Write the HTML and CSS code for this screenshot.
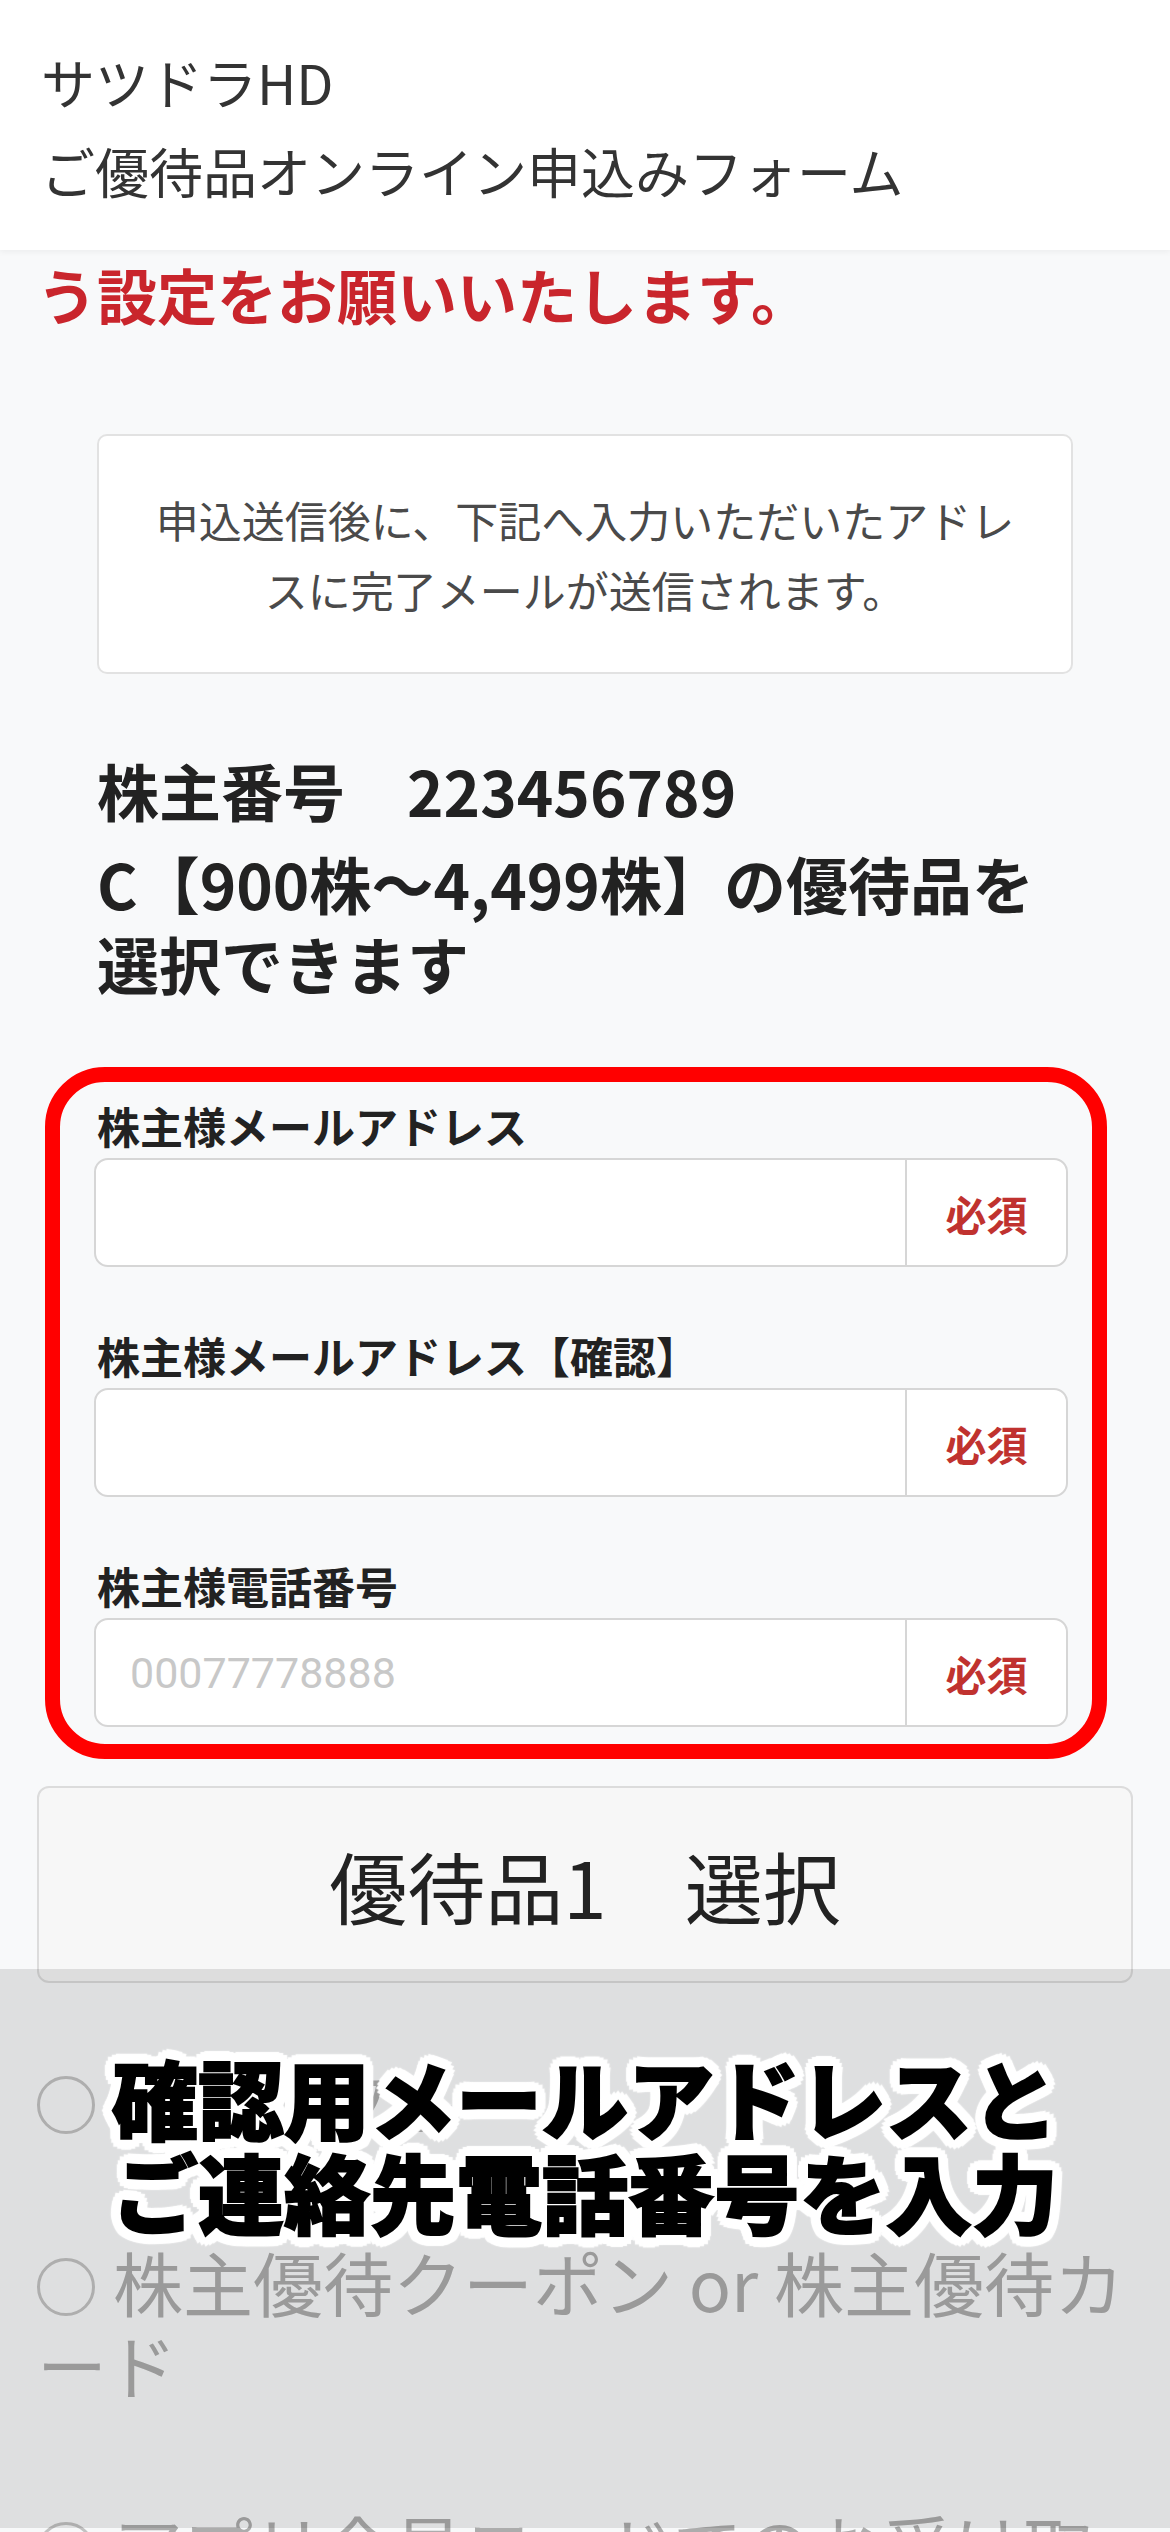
FILE: index.html
```html
<!DOCTYPE html>
<html lang="ja">

<head>
    <meta charset="UTF-8" />
    <meta name="viewport" content="width=device-width, initial-scale=1.0" />
    <title>サツドラHD ご優待品オンライン申込みフォーム</title>
    <link rel="stylesheet" href="styles.css">
</head>

<body>
    <header class="site-header">
        <div class="brand">サツドラHD</div>
        <div class="form-title">ご優待品オンライン申込みフォーム</div>
    </header>

    <main class="content">
        <p class="notice">う設定をお願いいたします。</p>

        <div class="info-box">申込送信後に、下記へ入力いただいたアドレスに完了メールが送信されます。</div>

        <div class="member">
            <p>株主番号　223456789</p>
            <p>C【900株〜4,499株】の優待品を選択できます</p>
        </div>

        <form class="fields">
            <div class="field">
                <label for="mail">株主様メールアドレス</label>
                <div class="input-group">
                    <input type="email" id="mail" name="mail" />
                    <span class="required">必須</span>
                </div>
            </div>

            <div class="field">
                <label for="mail-confirm">株主様メールアドレス【確認】</label>
                <div class="input-group">
                    <input type="email" id="mail-confirm" name="mail_confirm" />
                    <span class="required">必須</span>
                </div>
            </div>

            <div class="field">
                <label for="tel">株主様電話番号</label>
                <div class="input-group">
                    <input type="tel" id="tel" name="tel" placeholder="00077778888" />
                    <span class="required">必須</span>
                </div>
            </div>

            <!-- 注釈の赤枠 -->
            <div class="highlight"></div>
        </form>

        <button class="select-btn" type="button">優待品1　選択</button>

        <div class="choices">
            <label class="choice"><span class="radio"></span>優待ギフト</label>
            <label class="choice"><span class="radio"></span>株主優待クーポン or 株主優待カード</label>
            <label class="choice"><span class="radio"></span>アプリ会員コードでのお受け取り</label>
        </div>
    </main>

    <div class="caption-layer">
        <p class="caption">確認用メールアドレスと<br>ご連絡先電話番号を入力</p>
    </div>
</body>

</html>
```

FILE: styles.css
```css
* {
    box-sizing: border-box;
}

html,
body {
    height: 2532px;
    overflow: hidden;
}

body {
    margin: 0;
    background: #f8f9fa;
    font-family: "Noto Sans CJK JP", "Noto Sans", sans-serif;
    color: #222;
}

.site-header {
    background: #fff;
    padding: 37px 41px 35px;
    font-size: 54px;
    line-height: 89px;
    color: #333;
    box-shadow: 0 2px 6px rgba(0, 0, 0, 0.05);
}

.content {
    padding: 0 37px;
}

.notice {
    margin: 4px 0 0;
    font-size: 60px;
    font-weight: 700;
    line-height: 80px;
    color: #c9252c;
}

.info-box {
    margin: 100px 60px 0;
    padding: 48px 50px;
    background: #fff;
    border: 2px solid #e2e2e2;
    border-radius: 10px;
    font-size: 43px;
    line-height: 70px;
    text-align: center;
    color: #4a4a4a;
}

.member {
    margin: 76px 86px 0 60px;
    font-size: 62px;
    font-weight: 700;
    line-height: 80px;
}

.member p {
    margin: 0;
}

.member p + p {
    margin-top: 13px;
}

.fields {
    position: relative;
    margin: 92px 65px 0 57px;
}

.field + .field {
    margin-top: 58px;
}

.field label {
    display: block;
    padding-left: 3px;
    margin-bottom: 3px;
    font-size: 43px;
    font-weight: 700;
    line-height: 60px;
}

.input-group {
    display: flex;
    height: 109px;
    background: #fff;
    border: 2px solid #d6d6d6;
    border-radius: 14px;
    overflow: hidden;
}

.input-group input {
    flex: 1;
    min-width: 0;
    border: none;
    background: transparent;
    padding: 0 34px;
    font-family: Roboto, "Liberation Sans", sans-serif;
    font-size: 43px;
    color: #333;
}

.input-group input::placeholder {
    color: #c8c8c8;
}

.required {
    width: 161px;
    border-left: 2px solid #d6d6d6;
    display: flex;
    align-items: center;
    justify-content: center;
    font-size: 41px;
    font-weight: 700;
    color: #c0322f;
}

.highlight {
    position: absolute;
    top: -28px;
    left: -49px;
    right: -39px;
    bottom: -32px;
    border: 15px solid #ff0000;
    border-radius: 60px;
    pointer-events: none;
}

.select-btn {
    display: block;
    width: 100%;
    height: 197px;
    margin-top: 59px;
    background: #f7f7f7;
    border: 2px solid #dcdcdc;
    border-radius: 12px;
    font-family: "Noto Sans CJK JP", sans-serif;
    font-size: 78px;
    color: #222;
}

.choices {
    margin-top: 76px;
}

.choice {
    display: block;
    font-size: 70px;
    line-height: 82px;
    color: #acacac;
}

.choice + .choice {
    margin-top: 100px;
}

.radio {
    display: inline-block;
    width: 58px;
    height: 58px;
    margin-right: 18px;
    border: 3px solid #c2c2c2;
    border-radius: 50%;
    vertical-align: -4px;
}

/* 動画キャプション風のオーバーレイ */
.caption-layer {
    position: fixed;
    left: 0;
    right: 0;
    top: 1969px;
    height: 559px;
    padding-top: 81px;
    background: rgba(0, 0, 0, 0.1);
    text-align: center;
}

.caption {
    margin: 0;
    font-size: 86px;
    font-weight: 900;
    line-height: 94px;
    color: #000;
    -webkit-text-stroke: 2px #000;
    text-shadow:
        11px 0 1px #fff, -11px 0 1px #fff, 0 11px 1px #fff, 0 -11px 1px #fff,
        8px 8px 1px #fff, -8px 8px 1px #fff, 8px -8px 1px #fff, -8px -8px 1px #fff,
        10px 4px 1px #fff, -10px 4px 1px #fff, 10px -4px 1px #fff, -10px -4px 1px #fff,
        4px 10px 1px #fff, -4px 10px 1px #fff, 4px -10px 1px #fff, -4px -10px 1px #fff,
        5px 0 0 #fff, -5px 0 0 #fff, 0 5px 0 #fff, 0 -5px 0 #fff;
}
```
